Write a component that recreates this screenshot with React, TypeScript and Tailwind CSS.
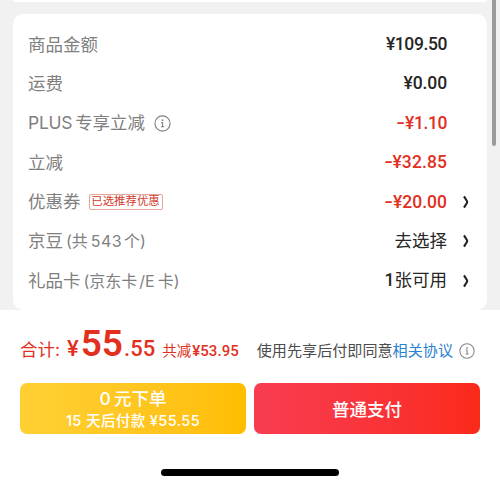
import type { ReactNode } from 'react';

interface RowProps {
  label: ReactNode;
  value: ReactNode;
  kind?: 'price' | 'discount' | 'text';
  arrow?: boolean;
}

function InfoIcon({ size, className }: { size: number; className?: string }) {
  return (
    <svg width={size} height={size} viewBox="0 0 17 17" fill="none" stroke="currentColor" className={className}>
      <circle cx="8.5" cy="8.5" r="7.6" strokeWidth="1.1" />
      <path d="M7.1 7.5h1.5v4.2M7 11.8h3.2" strokeWidth="1.1" />
      <circle cx="8.5" cy="5.2" r="0.9" fill="currentColor" stroke="none" />
    </svg>
  );
}

function Arrow() {
  return (
    <svg width="8" height="14" viewBox="0 0 8 14" fill="none" stroke="#222" strokeWidth="2.1">
      <path d="M2 1.4 4.9 6q.6 1 0 2L2 12.6" />
    </svg>
  );
}

const valueStyles = {
  price: 'pt-px font-[Roboto,sans-serif] text-[17.5px] font-medium tracking-[-0.4px] text-[#262626]',
  discount: 'pt-px font-[Roboto,sans-serif] text-[17.5px] font-medium text-[#e1301e]',
  text: 'text-[17.5px] text-[#262626]',
};

function Row({ label, value, kind = 'price', arrow }: RowProps) {
  return (
    <div className="flex h-[39.4px] items-center whitespace-nowrap">
      <div className="flex flex-1 items-center text-[17.5px] text-[#808080]">{label}</div>
      <span className={valueStyles[kind]}>
        {kind === 'discount' && <span className="inline-block origin-right scale-x-140">-</span>}
        {value}
      </span>
      <div className="flex w-[26px] shrink-0 justify-end pr-[3px]">{arrow && <Arrow />}</div>
    </div>
  );
}

export default function App() {
  return (
    <div className="flex h-[486px] w-[500px] flex-col overflow-hidden bg-white font-['Inter','Noto_Sans_CJK_SC',sans-serif] leading-none">
      <div className="relative h-[310px] shrink-0 bg-[#f1f1f1] px-[13px]">
        <div className="h-[2px] rounded-b-lg bg-white" />
        <div className="mt-3 h-[296px] rounded-[10px] bg-white pt-[10.6px] pr-[14px] pl-[15px]">
          <Row label="商品金额" value="¥109.50" />
          <Row label="运费" value={<span className="tracking-[-0.1px]">¥0.00</span>} />
          <Row
            label={
              <>
                <span className="tracking-[-0.3px]">PLUS</span>
                <span className="ml-[3px]">专享立减</span>
                <InfoIcon size={17} className="ml-[9px]" />
              </>
            }
            value={<span className="tracking-[-0.4px]">¥1.10</span>}
            kind="discount"
          />
          <Row label="立减" value={<span className="tracking-[0.1px]">¥32.85</span>} kind="discount" />
          <Row
            label={
              <>
                <span>优惠券</span>
                <span className="ml-2 flex h-4 w-[74px] items-center justify-center rounded-[2px] border border-[#e5a79d] text-[11.4px] text-[#d03a2a]">
                  已选推荐优惠
                </span>
              </>
            }
            value="¥20.00"
            kind="discount"
            arrow
          />
          <Row
            label={
              <>
                <span>京豆</span>
                <span className="ml-[3px] text-[16px]">(共</span>
                <span className="ml-[3px] text-[16px] tracking-[0.4px]">543</span>
                <span className="ml-[2px] text-[16px]">个)</span>
              </>
            }
            value="去选择"
            kind="text"
            arrow
          />
          <Row
            label={
              <>
                <span>礼品卡</span>
                <span className="ml-[3px] text-[16px]">(京东卡</span>
                <span className="ml-[2px] text-[16px]">/E</span>
                <span className="ml-[3px] text-[16px]">卡)</span>
              </>
            }
            value={
              <>
                <span className="font-[Roboto,sans-serif] font-medium">1</span>张可用
              </>
            }
            kind="text"
            arrow
          />
        </div>
        <div className="absolute top-0 right-1 h-[146px] w-1 rounded-b-full bg-[#9a9a9a]" />
      </div>

      <div className="flex h-[73px] shrink-0 items-start justify-between pr-[25px] pl-5 whitespace-nowrap">
        <div className="flex items-baseline pt-[15px] text-[#e1301e]">
          <span className="text-[17.5px]">合计:</span>
          <span className="ml-[7px] font-[Roboto,sans-serif] text-[22px] font-medium">¥</span>
          <span className="ml-[2px] font-[Roboto,sans-serif] text-[37px] font-semibold">55</span>
          <span className="ml-[1px] font-[Roboto,sans-serif] text-[22px] font-medium">.55</span>
          <span className="ml-[7px] text-[14.5px]">共减</span>
          <span className="ml-px font-[Roboto,sans-serif] text-[15px] font-medium tracking-[0.1px]">¥53.95</span>
        </div>
        <div className="flex items-center pt-[33px] text-[15.1px] text-[#4c4c4c]">
          <span>使用先享后付即同意</span>
          <span className="text-[#2b82d0]">相关协议</span>
          <InfoIcon size={16} className="ml-[6px] text-[#858585]" />
        </div>
      </div>

      <div className="flex h-[51px] shrink-0 gap-2 px-5">
        <button className="flex flex-1 flex-col items-center justify-center gap-[6px] rounded-[7px] bg-linear-to-r from-[#ffd033] to-[#ffbd00] pt-px font-medium text-white">
          <span className="flex gap-[3px] text-[17.5px]">
            <span>0</span>
            <span>元下单</span>
          </span>
          <span className="text-[14.5px] tracking-[0.4px]">15 天后付款 ¥55.55</span>
        </button>
        <button className="flex flex-1 items-center justify-center rounded-[7px] bg-linear-to-r from-[#f83c51] to-[#fb2a18] pt-[2px] text-[17.5px] font-medium text-white">
          普通支付
        </button>
      </div>
      <div className="mx-auto mt-[35px] h-[7px] w-[178px] shrink-0 rounded-full bg-black" />
    </div>
  );
}
